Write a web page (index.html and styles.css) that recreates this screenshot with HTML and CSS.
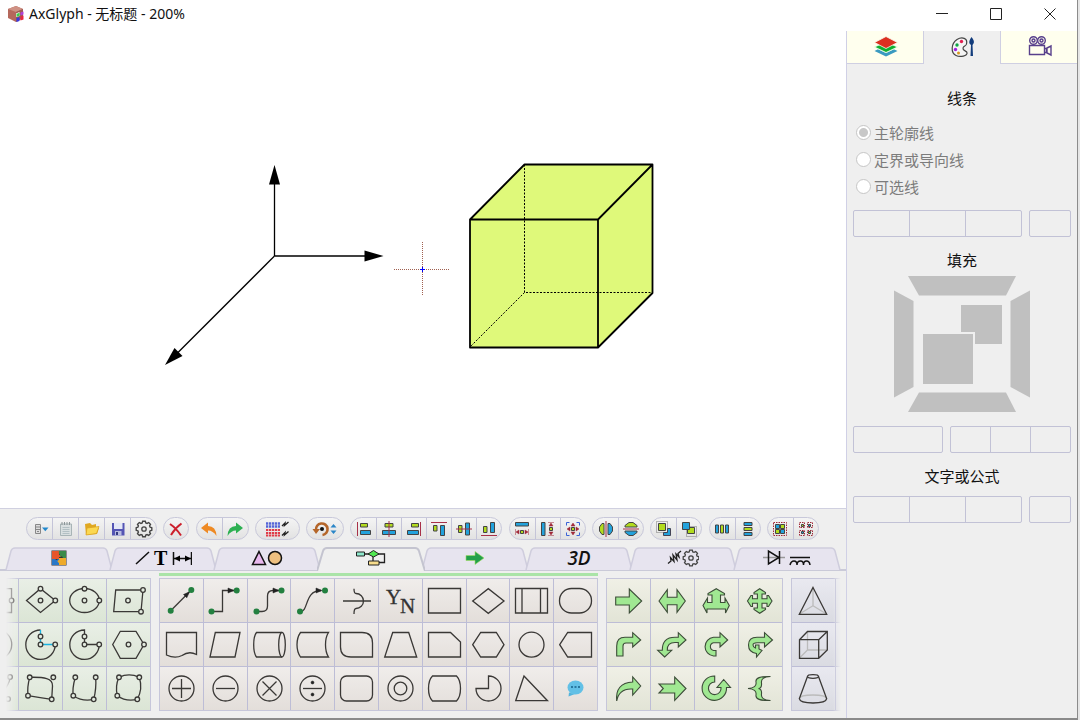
FILE: index.html
```html
<!DOCTYPE html>
<html lang="zh-CN">
<head>
    <meta charset="UTF-8">
    <meta name="viewport" content="width=device-width, initial-scale=1.0">
    <title>AxGlyph - 无标题 - 200%</title>
    <link rel="stylesheet" href="styles.css">
</head>
<body>

<div class="window">
<header class="titlebar">
    <svg class="app-logo" width="18" height="18" viewBox="0 0 18 18">
        <path d="M9 1L16 4V13L9 17L1 13V4Z" fill="#b5685c"/>
        <path d="M9 1L16 4L9 7L1 4Z" fill="#cf9184"/>
        <path d="M9 7L16 4V13L9 17Z" fill="#a05c54"/>
        <path d="M9 8.500l3.500-1.500v4l-3.500 1z" fill="#fff"/>
        <path d="M9.500 9l3-1.200v3l-3 1z" fill="#3ad04a"/>
        <path d="M13.500 7.500l3-1v3l-3 1z" fill="#b040d8"/>
        <path d="M9.500 13l3-1v4l-3 1z" fill="#3a38e0"/>
        <path d="M13.500 11.500l3-1v4l-3 1z" fill="#e82840"/>
    </svg>
    <h1>AxGlyph - 无标题 - 200%</h1>
    <div class="window-buttons">
        <button aria-label="最小化"><svg width="12" height="12" viewBox="0 0 12 12"><path d="M0 5.500H12"/></svg></button>
        <button aria-label="最大化"><svg width="12" height="12" viewBox="0 0 12 12"><path d="M.5 .5H11.500V11.500H.5Z"/></svg></button>
        <button aria-label="关闭"><svg width="12" height="12" viewBox="0 0 12 12"><path d="M.5 .5L11.500 11.500M11.500 .5L.5 11.500"/></svg></button>
    </div>
</header>

<div class="workspace">
<main class="editor">
    <div class="canvas">
        <svg width="100%" height="100%">
            <!-- axes -->
            <g stroke="#000" stroke-width="1.3">
                <path d="M274.500 225V150"/>
                <path d="M274.500 225H366"/>
                <path d="M274.500 225L177 322.500"/>
            </g>
            <path d="M274.500 134L280 153.500H269Z"/>
            <path d="M383.500 225L364.500 230.500V219.500Z"/>
            <path d="M165 334L174.500 317L182.500 325Z"/>
            <!-- cursor -->
            <path d="M394 238.500H449M422.500 211V265" stroke="#a06050" stroke-dasharray="1 1"/>
            <path d="M420 238.500H425M422.500 236V241" stroke="#00f"/>
            <!-- cube -->
            <path d="M470 188.500L524.500 133.500H652.500V262L598 316.500H470Z" fill="#dff97a"/>
            <path d="M524.500 133.500V261.500H652M524.500 261.500L470 316" fill="none" stroke="#000" stroke-dasharray="2 1.500"/>
            <path d="M470 188.500L524.500 133.500H652.500V262L598 316.500H470ZM470 188.500H598V316.500M598 188.500L652.500 133.500" fill="none" stroke="#000" stroke-width="1.800" stroke-linejoin="round"/>
        </svg>
    </div>

    <div class="dock">
        <div class="toolbar">
            <div class="pill">
                <button aria-label="新建"><svg width="18" height="18"><path d="M4.500 4.500h5v9h-5zM4.500 7h5M4.500 9.500h5M6 11.500h2" fill="#ddd" stroke="#888"/><path d="M11 7.500h6.500l-3.200 3.700z" fill="#2288cc"/></svg></button>
                <button aria-label="页面"><svg width="18" height="18"><path d="M3.500 4h11v11.500h-11z" fill="#d9dfe0" stroke="#a8b4b6"/><path d="M5.500 7.500h7M5.500 9.500h7M5.500 11.500h7M5.500 13.500h7" stroke="#b3c0c4"/><path d="M5 2v3M7.500 2v3M10 2v3M12.500 2v3" stroke="#8c9698"/></svg></button>
                <button aria-label="打开"><svg width="18" height="18"><path d="M2 4l5-1 2 2 4-1v3l3 1-2 6-11 1z" fill="#e0a820"/><path d="M4 8l12-1.500-2.500 7-10.500 1.500z" fill="#fbd850" stroke="#d8a020" stroke-width=".7"/></svg></button>
                <button aria-label="保存"><svg width="18" height="18"><path d="M3 3h12.500v12.500H3z" fill="#5455b4"/><path d="M5 3h8.500v6H5z" fill="#e4e8f6"/><path d="M6 11h6.500v4.500H6z" fill="#b8bce0"/><path d="M7 12h2v3H7z" fill="#333a80"/></svg></button>
                <button aria-label="设置"><svg width="18" height="18" fill="none" stroke="#444"><path d="M7.700 2.200h2.600l.5 1.700 1.300.5 1.600-.9 1.800 1.800-.9 1.600.5 1.300 1.700.5v2.600l-1.700.5-.5 1.300.9 1.600-1.800 1.800-1.600-.9-1.300.5-.5 1.700H7.700l-.5-1.700-1.300-.5-1.600.9-1.800-1.800.9-1.600-.5-1.300-1.700-.5V8.700l1.700-.5.5-1.300-.9-1.600 1.800-1.800 1.600.9 1.300-.5z" transform="translate(0 -1)" stroke-width="1.400"/><circle cx="9" cy="9" r="2.200" stroke-width="1.300"/></svg></button>
            </div>
            <div class="pill single">
                <button aria-label="删除"><svg width="18" height="18"><path d="M3 4Q9 8 14 15.500M14.500 3.500Q8 8 4 15" fill="none" stroke="#cc1f2c" stroke-width="2"/></svg></button>
            </div>
            <div class="pill">
                <button aria-label="撤销"><svg width="18" height="18"><path d="M1 8L8 2.500V6Q16 6 16.500 16Q13 10.500 8 10.500V13.500Z" fill="#ee8a24"/></svg></button>
                <button aria-label="重做"><svg width="18" height="18"><path d="M17 8L10 2.500V6Q2 6 1.500 16Q5 10.500 10 10.500V13.500Z" fill="#2db052"/></svg></button>
            </div>
            <div class="pill wide">
                <button aria-label="网格">
                    <svg width="26" height="18" fill="none">
                        <path d="M2 3.500h14M2 6.500h14" stroke="#5566d8" stroke-width="2.300" stroke-dasharray="2.300 .7"/>
                        <path d="M2 10h14M2 13h14M2 15.500h14" stroke="#e03c48" stroke-width="2.200" stroke-dasharray="2.300 .7"/>
                        <path d="M18 6L21 3L20.500 5.500L24.500 2M18 15.500L21 12.500L20.500 15L24.500 11.500" stroke="#222" stroke-width="1.300"/>
                    </svg>
                </button>
            </div>
            <div class="pill mid">
                <button aria-label="旋转">
                    <svg width="26" height="18">
                        <path d="M4 10A5.800 5.800 0 1 1 10.500 15" fill="none" stroke="#b5662a" stroke-width="2.600"/>
                        <path d="M.5 9h7.500l-4 5z" fill="#b5662a"/>
                        <circle cx="10" cy="9" r="2" fill="#111"/>
                        <path d="M18.500 7.500l3-3.500 3 3.500zM18.500 10.500l3 3.500 3-3.500z" fill="#2a86c8"/>
                    </svg>
                </button>
            </div>
            <div class="pill align">
                <button aria-label="左对齐"><svg width="18" height="18"><path class="guide" d="M2.500 2V16"/><path class="lime" d="M5.500 3.500h7v3.500h-7z"/><path class="blue" d="M5.500 10.500h10v4h-10z"/></svg></button>
                <button aria-label="水平居中"><svg width="18" height="18"><path class="lime" d="M5 3.500h8v3.500H5z"/><path class="blue" d="M2.500 10.500h13v4h-13z"/><path class="guide" d="M9 1V17"/></svg></button>
                <button aria-label="右对齐"><svg width="18" height="18"><path class="guide" d="M15.500 2V16"/><path class="lime" d="M6.500 3.500h7v3.500h-7z"/><path class="blue" d="M2.500 10.500h11v4h-11z"/></svg></button>
                <button aria-label="顶端对齐"><svg width="18" height="18"><path class="guide" d="M1 2.500H17"/><path class="lime" d="M3.500 5.500h3.500v5.500h-3.500z"/><path class="blue" d="M10.500 5.500h4v10h-4z"/></svg></button>
                <button aria-label="垂直居中"><svg width="18" height="18"><path class="lime" d="M3.500 5.500h3.500v7h-3.500z"/><path class="blue" d="M10.500 3h4v12h-4z"/><path class="guide" d="M1 9H17"/></svg></button>
                <button aria-label="底端对齐"><svg width="18" height="18"><path class="guide" d="M1 15.500H17"/><path class="lime" d="M3.500 6.500h3.500v6h-3.500z"/><path class="blue" d="M10.500 2.500h4v10h-4z"/></svg></button>
            </div>
            <div class="pill align">
                <button aria-label="等宽"><svg width="18" height="18"><path class="blue" d="M2.500 2.500h13v3.500h-13z"/><path class="lime" d="M7.500 10.500h3v3h-3z"/><path class="arrows" d="M2.500 9v6M15.500 9v6M3 12l3-2v4zM15 12l-3-2v4z"/></svg></button>
                <button aria-label="等高"><svg width="18" height="18"><path class="blue" d="M2.500 2.500h3.500v13h-3.500z"/><path class="lime" d="M10.500 7.500h3v3h-3z"/><path class="arrows" d="M9 2.500h6M9 15.500h6M12 3l-2 3h4zM12 15l-2-3h4z"/></svg></button>
                <button aria-label="等大"><svg width="18" height="18"><path d="M2.500 5.500v-3h3M12.500 2.500h3v3M15.500 12.500v3h-3M5.500 15.500h-3v-3" fill="none" stroke="#3a62d8"/><path class="lime" d="M7.500 7.500h3v3h-3z"/><path class="arrows" d="M3 9l3-2v4zM15 9l-3-2v4zM9 3l-2 3h4zM9 15l-2-3h4z"/></svg></button>
            </div>
            <div class="pill align">
                <button aria-label="水平翻转"><svg width="18" height="18"><path class="lime" d="M7 3.500v11H5L2.500 11V7L5 3.500z"/><path class="blue" d="M11 3.500v11h2l2.500-3.500V7L13 3.500z"/><path class="guide" d="M9 1V17"/></svg></button>
                <button aria-label="垂直翻转"><svg width="18" height="18"><path class="lime" d="M3 7h12V5.500L11 2.500H7L3 5.500z"/><path class="blue" d="M3 11h12v1.500l-4 3H7l-4-3z"/><path class="guide" d="M1 9H17"/></svg></button>
            </div>
            <div class="pill align">
                <button aria-label="置于顶层"><svg width="18" height="18"><path d="M1.500 1.500h11v11h-11z" fill="none" stroke="#777" stroke-dasharray="1 1"/><path d="M12.500 8.500h3v7h-7v-3h4z" fill="#22a2dc" stroke="#445"/><path class="lime" d="M3.500 3.500h7v7h-7z"/></svg></button>
                <button aria-label="置于底层"><svg width="18" height="18"><path d="M6.500 6.500h10v10h-10z" fill="none" stroke="#777" stroke-dasharray="1 1"/><path class="lime" d="M7.500 7.500h7v6h-7z"/><path class="blue" d="M2.500 2.500h7v7h-7z"/></svg></button>
            </div>
            <div class="pill align">
                <button aria-label="横向分布"><svg width="18" height="18"><path class="blue" d="M2.500 5h3v8h-3zM12.500 5h3v8h-3z"/><path class="lime" d="M7.500 5h3v8h-3z"/></svg></button>
                <button aria-label="纵向分布"><svg width="18" height="18"><path class="blue" d="M5 2.500h8v3H5zM5 12.500h8v3H5z"/><path class="lime" d="M5 7.500h8v3H5z"/></svg></button>
            </div>
            <div class="pill align">
                <button aria-label="组合"><svg width="18" height="18"><path d="M2.500 2.500h13v13h-13z" fill="none" stroke="#a02838" stroke-dasharray="1.500 1"/><path class="lime" d="M9.500 4.500h4v4h-4zM4.500 9.500h4v4h-4z"/><path class="blue" d="M4.500 4.500h4v4h-4zM9.500 9.500h4v4h-4z"/></svg></button>
                <button aria-label="取消组合"><svg width="18" height="18"><path d="M2.500 2.500h5v5h-5zM10.500 2.500h5v5h-5zM2.500 10.500h5v5h-5zM10.500 10.500h5v5h-5z" fill="none" stroke="#a02838" stroke-dasharray="1.500 1"/><path class="lime" d="M4.500 4.500h2v2h-2zM11.500 11.500h2v2h-2z"/><path class="blue" d="M11.500 4.500h2v2h-2zM4.500 11.500h2v2h-2z"/></svg></button>
            </div>
        </div>

        <nav class="tabs">
            <button aria-label="图库"><svg width="16" height="16"><path d="M.5 .5h15v15H.5z" fill="#333"/><path d="M1 1h7v4q3 0 2 2H8v2H5q-2 2-2 0H1z" fill="#e8552a"/><path d="M8 1h7v7h-3q-1-3-3-1V5q-2-2-1-4z" fill="#3a8a48"/><path d="M1 9h3q1 2 3 0h1v6H1z" fill="#2a78c8"/><path d="M8 8h7v7H8v-2q-3-2 0-3z" fill="#eeaa2a"/></svg></button>
            <button aria-label="线条与文字"><svg width="58" height="22"><path d="M2 17L15 5M39.500 5v13M57.500 5v13M40 11.500h17" fill="none" stroke="#111" stroke-width="1.500"/><path d="M40 11.500l6-3v6zM57 11.500l-6-3v6z"/><text class="serif-icon" x="20" y="18">T</text></svg></button>
            <button aria-label="基本图形"><svg width="32" height="16"><path d="M8 1.500L14.500 14.500H1.500Z" fill="#e8b8ee" stroke="#111" stroke-width="1.500"/><circle cx="24" cy="8" r="6.500" fill="#eec080" stroke="#111" stroke-width="1.500"/></svg></button>
            <button class="active" aria-label="流程图"><svg width="32" height="18" stroke="#222"><path d="M9 5h8M18 7v5M23 5h6.500v8.500h-6" fill="none" stroke-width="1.300"/><path d="M1.500 3h8v4h-8z" fill="#8ee8cc"/><path d="M18.500 1.500L24 5l-5.500 3L13 5z" fill="#50e850"/><path d="M13.500 12h10.500v4H13.500z" fill="#f6dc8c"/></svg></button>
            <button aria-label="箭头"><svg width="20" height="16"><path d="M1 5.500h9V1.500L19 8l-9 6.500v-4H1z" fill="#23a04a" stroke="#9fdc60" stroke-width=".6"/></svg></button>
            <button class="tab-3d">3D</button>
            <button aria-label="机械"><svg width="32" height="18" fill="none" stroke="#222"><path d="M1 14.500L4 12L3.500 8.500L7 12.500L6 6L10 11L9 5L12 8L11 4.500L14 2" stroke-width="1.300"/><g stroke="#444" transform="translate(15 0)"><path d="M7.700 1.200h2.600l.5 1.700 1.300.5 1.600-.9 1.800 1.800-.9 1.600.5 1.300 1.700.5v2.600l-1.700.5-.5 1.300.9 1.600-1.800 1.800-1.600-.9-1.300.5-.5 1.700H7.700l-.5-1.700-1.300-.5-1.600.9-1.800-1.800.9-1.600-.5-1.300-1.700-.5V7.700l1.700-.5.5-1.300-.9-1.600 1.800-1.800 1.600.9 1.300-.5z" stroke-width="1.300"/><circle cx="9" cy="9" r="2.200" stroke-width="1.300"/></g></svg></button>
            <button aria-label="电路"><svg width="50" height="18" fill="none" stroke="#111" stroke-width="1.500"><path d="M1 8.500h22" stroke="#999"/><path d="M6.500 2v13L17 8.500zM17.500 2v13"/><path d="M28 8.500h20M28 16q1-4 4-4 3 0 3 4 0-4 3.500-4 3 0 3 4 0-4 3-4 3 0 3.500 4"/></svg></button>
        </nav>

        <div class="palette">
            <div class="group nodes">
                <button class="cut-left" aria-label="矩形"><svg viewBox="0 0 43 43"><path d="M8 9.700H36.500V33.500H8"/><circle cx="36.500" cy="21.500" r="2.300"/></svg></button>
                <button aria-label="菱形节点"><svg viewBox="0 0 43 43"><path d="M7.500 21.500L21.500 9.700L36.300 21.500L21.500 33.500Z"/><circle cx="21.500" cy="9.700" r="2.300"/><circle cx="36.300" cy="21.500" r="2.300"/><circle cx="21.500" cy="21.500" r="2.300"/></svg></button>
                <button aria-label="椭圆节点"><svg viewBox="0 0 43 43"><ellipse cx="21.500" cy="21.500" rx="14.800" ry="12"/><circle cx="21.500" cy="9.700" r="2.300"/><circle cx="36.300" cy="21.500" r="2.300"/><circle cx="21.500" cy="21.500" r="2.300"/></svg></button>
                <button aria-label="四边形节点"><svg viewBox="0 0 43 43"><path d="M8.700 11H36L34 32.700H6.700Z"/><circle cx="36" cy="11" r="2.300"/><circle cx="34" cy="32.700" r="2.300"/><circle cx="21" cy="21.500" r="2.300"/></svg></button>

                <button class="cut-left" aria-label="圆"><svg viewBox="0 0 43 43"><circle class="outline" cx="22" cy="21.500" r="14.700"/></svg></button>
                <button aria-label="圆弧"><svg viewBox="0 0 43 43"><path d="M21.500 7A14.700 14.700 0 1 0 36.200 21.500"/><path d="M21.500 7V21.500H36" stroke="#1bb2e0"/><circle cx="21.500" cy="13.500" r="2.300"/><circle cx="21.500" cy="21.500" r="2.300"/><circle cx="36.200" cy="21.500" r="2.300"/></svg></button>
                <button aria-label="扇形"><svg viewBox="0 0 43 43"><path d="M21.500 7A14.700 14.700 0 1 0 36.200 21.500H21.500Z"/><circle cx="21.500" cy="13.500" r="2.300"/><circle cx="21.500" cy="21.500" r="2.300"/><circle cx="36.200" cy="21.500" r="2.300"/></svg></button>
                <button aria-label="正多边形"><svg viewBox="0 0 43 43"><path d="M5.700 21.500L13.300 8.300H29L37 21.500L29 35.300H13.300Z"/><circle cx="37" cy="21.500" r="2.300"/><circle cx="21.500" cy="21.500" r="2.300"/></svg></button>

                <button class="cut-left" aria-label="曲线"><svg viewBox="0 0 43 43"><path d="M35 10Q35 15 30 22"/><circle cx="35" cy="10" r="2.300"/><circle cx="33" cy="32" r="2.300"/></svg></button>
                <button aria-label="闭合曲线"><svg viewBox="0 0 43 43"><path d="M10.700 10.300C25 10 34 11 33.500 19L32.700 32.300Q22 31 9 28.700Q8 20 10.700 10.300"/><circle cx="10.700" cy="10.300" r="2.300"/><circle cx="34.300" cy="10.300" r="2.300"/><circle cx="9" cy="28.700" r="2.300"/><circle cx="32.700" cy="32.300" r="2.300"/></svg></button>
                <button aria-label="开放曲线"><svg viewBox="0 0 43 43"><path d="M12.300 10.300Q9 22 10.300 28.700Q20 35 30.700 32.300Q33.500 22 32.700 10.300"/><circle cx="12.300" cy="10.300" r="2.300"/><circle cx="32.700" cy="10.300" r="2.300"/><circle cx="10.300" cy="28.700" r="2.300"/><circle cx="30.700" cy="32.300" r="2.300"/></svg></button>
                <button aria-label="平滑曲线"><svg viewBox="0 0 43 43"><path d="M12 10.300Q8 19 10.300 28.700Q19 35 30.300 32.300Q36 22 32.300 10.300Q22 5.500 12 10.300"/><circle cx="12" cy="10.300" r="2.300"/><circle cx="32.300" cy="10.300" r="2.300"/><circle cx="10.300" cy="28.700" r="2.300"/><circle cx="30.300" cy="32.300" r="2.300"/></svg></button>
            </div>

            <div class="group flow">
                <button aria-label="直线连接"><svg viewBox="0 0 43 43"><path d="M10.700 31.700L31.300 11"/><path class="tip" d="M29.500 12.800L23.500 15.500L26.800 18.800Z"/><circle class="dot" cx="10.700" cy="31.700" r="3"/><circle class="dot" cx="31.300" cy="11" r="3"/></svg></button>
                <button aria-label="折线连接"><svg viewBox="0 0 43 43"><path d="M7.500 32.500H18.500V11.500H32"/><path class="tip" d="M30 11.500L24 9V14Z"/><circle class="dot" cx="7.500" cy="32.500" r="3"/><circle class="dot" cx="32.700" cy="11.500" r="3"/></svg></button>
                <button aria-label="圆角连接"><svg viewBox="0 0 43 43"><path d="M8.500 32.500H14Q19.500 32.500 19.500 27V17Q19.500 11.500 25 11.500H33"/><path class="tip" d="M31 11.500L25 9V14Z"/><circle class="dot" cx="8.500" cy="32.500" r="3"/><circle class="dot" cx="33.500" cy="11.500" r="3"/></svg></button>
                <button aria-label="曲线连接"><svg viewBox="0 0 43 43"><path d="M9 32.500C18 33 13 11.500 30 11.500"/><path class="tip" d="M31 11.500L25 9V14Z"/><circle class="dot" cx="9" cy="32.500" r="3"/><circle class="dot" cx="34" cy="11.500" r="3"/></svg></button>
                <button aria-label="跨线"><svg viewBox="0 0 43 43"><path d="M8 22H36M19 9.700Q19 14.500 21 14.500A7.500 7.500 0 0 1 21 29.500Q19 29.500 19 35"/></svg></button>
                <button aria-label="是否"><svg viewBox="0 0 43 43"><text class="yn" x="7" y="25">Y</text><text class="yn" x="21" y="34">N</text></svg></button>
                <button aria-label="过程"><svg viewBox="0 0 43 43"><path d="M5.500 9.500H37.500V34H5.500Z"/></svg></button>
                <button aria-label="判定"><svg viewBox="0 0 43 43"><path d="M5.700 22L21.300 9.700L37 22L21.300 34.300Z"/></svg></button>
                <button aria-label="子过程"><svg viewBox="0 0 43 43"><path d="M5.500 9.500H37.500V34H5.500ZM12 9.500V34M30.500 9.500V34"/></svg></button>
                <button aria-label="终止"><svg viewBox="0 0 43 43"><rect x="5.500" y="9.500" width="32" height="24.500" rx="12"/></svg></button>

                <button aria-label="文档"><svg viewBox="0 0 43 43"><path d="M6.500 9.500H36.500V31.500Q29 27.500 22 32.500Q15 36 6.500 32Z"/></svg></button>
                <button aria-label="数据"><svg viewBox="0 0 43 43"><path d="M11.300 9.500H36L31 34H6Z"/></svg></button>
                <button aria-label="直接存储"><svg viewBox="0 0 43 43"><path d="M34 9.500H8.500Q5.700 13 5.700 21.700T8.500 34H34"/><ellipse cx="34" cy="21.700" rx="3.300" ry="12.300"/></svg></button>
                <button aria-label="存储数据"><svg viewBox="0 0 43 43"><path d="M9.500 9.500H37.500Q34.500 14 34.500 21.700T37.500 34H9.500Q6 29 6 21.700T9.500 9.500Z"/></svg></button>
                <button aria-label="对角圆角"><svg viewBox="0 0 43 43"><path d="M5.500 9.500H27Q37.500 9.500 37.500 20V34H16Q5.500 34 5.500 24Z"/></svg></button>
                <button aria-label="手动操作"><svg viewBox="0 0 43 43"><path d="M13.700 9.500H29.700L37.700 34H5.700Z"/></svg></button>
                <button aria-label="卡片"><svg viewBox="0 0 43 43"><path d="M5.500 9.500H27.500L37.500 19V34H5.500Z"/></svg></button>
                <button aria-label="准备"><svg viewBox="0 0 43 43"><path d="M5.700 21.700L13.700 9.500H29.300L37 21.700L29.300 34H13.700Z"/></svg></button>
                <button aria-label="联系"><svg viewBox="0 0 43 43"><circle cx="21.500" cy="21.700" r="12.500"/></svg></button>
                <button aria-label="显示"><svg viewBox="0 0 43 43"><path d="M5.700 21.700L13.700 9.500H37.500V34H13.700Z"/></svg></button>

                <button aria-label="加"><svg viewBox="0 0 43 43"><circle cx="21.500" cy="21.500" r="12.500"/><path d="M12 21.500H31M21.500 12V31"/></svg></button>
                <button aria-label="减"><svg viewBox="0 0 43 43"><circle cx="21.500" cy="21.500" r="12.500"/><path d="M12 21.500H31"/></svg></button>
                <button aria-label="乘"><svg viewBox="0 0 43 43"><circle cx="21.500" cy="21.500" r="12.500"/><path d="M14.500 14.500L28.500 28.500M28.500 14.500L14.500 28.500"/></svg></button>
                <button aria-label="除"><svg viewBox="0 0 43 43"><circle cx="21.500" cy="21.500" r="12.500"/><path d="M12 21.500H31"/><circle class="tip" cx="21.500" cy="15.500" r="1.500"/><circle class="tip" cx="21.500" cy="27.500" r="1.500"/></svg></button>
                <button aria-label="圆角矩形"><svg viewBox="0 0 43 43"><rect x="5.500" y="9" width="32" height="25" rx="6"/></svg></button>
                <button aria-label="同心圆"><svg viewBox="0 0 43 43"><circle cx="21.500" cy="21.500" r="12.500"/><circle cx="21.500" cy="21.500" r="6.300"/></svg></button>
                <button aria-label="鼓形"><svg viewBox="0 0 43 43"><path d="M9.500 9H33.500Q37.500 13 37.500 21.500T33.500 34H9.500Q5.500 30 5.500 21.500T9.500 9Z"/></svg></button>
                <button aria-label="缺角圆"><svg viewBox="0 0 43 43"><path d="M21.500 9A12.500 12.500 0 1 1 9 21.500H21.500Z"/></svg></button>
                <button aria-label="三角形"><svg viewBox="0 0 43 43"><path d="M14 9L37.500 33.700H5.700Z"/></svg></button>
                <button aria-label="批注"><svg viewBox="0 0 43 43"><path d="M15 25.500L14.500 29.500L21 27Z" fill="#55b4dc" stroke="none"/><ellipse cx="21.500" cy="20.500" rx="8" ry="7" fill="#62c0e6" stroke="none"/><path d="M17 20h2M20.500 20h2M24 20h2" stroke="#2878a0" stroke-width="2"/></svg></button>
            </div>

            <div class="group arrows-group">
                <button aria-label="右箭头"><svg viewBox="0 0 43 43"><path d="M8.700 18H22.300V10L34.700 22L22.300 34V26H8.700Z"/></svg></button>
                <button aria-label="左右箭头"><svg viewBox="0 0 43 43"><path d="M8 22L16.300 10.700V18.300H26V10.700L34.300 22L26 33.300V25.700H16.300V33.300Z"/></svg></button>
                <button aria-label="三向箭头"><svg viewBox="0 0 43 43"><path d="M21.300 9.700L29.500 14.500V16H25.500V23.500H30V19L34.300 26.500L30.500 34V30H12V34L8 26.500L12.500 19V23.500H17V16H13V14.500Z"/></svg></button>
                <button aria-label="四向箭头"><svg viewBox="0 0 43 43"><path d="M20.700 9.700L26.500 13.500V15H23V19.700H28V16.500H29.500L33 22L29.500 27.500H28V24.300H23V29H26.500V30.500L20.700 34.300L15 30.500V29H18.400V24.300H13.500V27.500H12L8.500 22L12 16.500H13.500V19.700H18.400V15H15V13.500Z"/></svg></button>

                <button aria-label="右转箭头"><svg viewBox="0 0 43 43"><path d="M9.700 33V23Q9.700 14.300 18 14.300H25.700V9.700L33.700 17L25.700 24V20H19Q16 20 16 23V33Z"/></svg></button>
                <button aria-label="双向弯箭头"><svg viewBox="0 0 43 43"><path d="M13.700 34L6.700 27.300H11.300Q11 14.300 24 14.300H27.300V9.700L35 17L27.300 24V19.500H24Q16 19.500 16.300 27.300H20.700Z"/></svg></button>
                <button aria-label="回转箭头"><svg viewBox="0 0 43 43"><path d="M25 14.300H18.500A9.400 9.400 0 0 0 18.500 33H21V27.500H18.500A4 4 0 0 1 18.500 19.700H25V24L32.700 17L25 9.700Z"/></svg></button>
                <button aria-label="双回转箭头"><svg viewBox="0 0 43 43"><path d="M25.500 14.300H18Q9.500 14.300 9.500 22Q9.500 29.500 17.500 30.500V34L23 27.500L20 26V22H16.500V25Q14 24 14 22Q14 19.700 18 19.700H25.500V24L33.500 17L25.500 9.700Z"/></svg></button>

                <button aria-label="弧形箭头"><svg viewBox="0 0 43 43"><path d="M9.700 34Q8 16 25.700 15V10L33.700 19L25.700 28V22Q12 21 9.700 34Z"/></svg></button>
                <button aria-label="燕尾箭头"><svg viewBox="0 0 43 43"><path d="M8 17H23.700V10L35 21.500L23.700 33.300V26H8L12.300 21.500Z"/></svg></button>
                <button aria-label="环形箭头"><svg viewBox="0 0 43 43"><path d="M19.700 9A12.200 12.200 0 1 0 31.500 20.500H35.500L28.700 12.500L22 20.500H26A6.300 6.300 0 1 1 19.700 15Z"/></svg></button>
                <button aria-label="花括号"><svg viewBox="0 0 43 43"><path d="M31.500 9.500Q16 9 17 15Q18 21 9 21.500Q18 22 17 28Q16 34 31.500 33.500Q21.500 33 22.500 27Q23 22 19.500 21.500Q23 21 22.500 16Q21.500 10 31.500 9.500Z"/></svg></button>
            </div>

            <div class="group solids">
                <button aria-label="四面体"><svg viewBox="0 0 43 43"><path class="hidden-edge" d="M21 8.500V26.700L7.500 35M21 26.700L34.500 35"/><path d="M21 8.500L34.700 35.300H7.300Z"/></svg></button>
                <button aria-label="更多"></button>
                <button aria-label="立方体"><svg viewBox="0 0 43 43"><path class="hidden-edge" d="M15.500 8.500V27H35M15.500 27L7.500 35"/><path d="M7.500 16.700L15.500 8.500H35.300V27L26.700 35.300H7.500ZM7.500 16.700H26.700V35.300M26.700 16.700L35.300 8.500"/></svg></button>
                <button aria-label="更多"></button>
                <button aria-label="圆台"><svg viewBox="0 0 43 43"><path class="hidden-edge" d="M7.300 31.700Q8 28 21 28T34.700 31.700"/><ellipse cx="21" cy="9.500" rx="5.500" ry="1.800"/><path d="M15.500 9.500L7.300 31.700Q8 36 21 36T34.700 31.700L26.500 9.500"/></svg></button>
                <button aria-label="更多"></button>
            </div>
        </div>
    </div>
</main>

<aside class="side">
    <nav class="side-tabs">
        <button aria-label="图层"><svg width="26" height="22"><path d="M13 10.500L24.500 16 13 21.500 1.500 16 5 14.300 13 18 21 14.300" fill="#3a9ac0"/><path d="M13 7L24.500 12 13 17.500 1.500 12z" fill="#10b030" stroke="#f8fff0" stroke-width=".8"/><path d="M13 1.500L24.500 7.500 13 13.500 1.500 7.500z" fill="#dc3020" stroke="#f8fff0" stroke-width=".8"/></svg></button>
        <button class="active" aria-label="样式"><svg width="26" height="22"><path d="M16.500 8C18 2 12 .5 7 3.500C1 7.500 .5 17 6 19.500C10 21.500 18 20 17 16.500C16.500 14.500 12.500 15 13 12C13.500 9.500 16 10.500 16.500 8Z" fill="#f4f4f4" stroke="#444" stroke-width="1.200"/><circle cx="11.500" cy="5.500" r="1.700" fill="#e02050"/><circle cx="7" cy="9" r="1.700" fill="#10a848"/><circle cx="5.500" cy="13.500" r="1.700" fill="#a020e0"/><circle cx="8.500" cy="17" r="1.500" fill="#d89820"/><path d="M21.500 1Q25 5 23.500 7.500L22.500 9L23 20H20.500L21 9L19.500 7.500Q18.500 5 21.500 1Z" fill="#123c7c"/></svg></button>
        <button aria-label="动画"><svg width="26" height="22" fill="none" stroke="#58408c" stroke-width="1.400"><circle cx="6.500" cy="5.500" r="3.800"/><circle cx="6.500" cy="5.500" r="1.500"/><circle cx="14.500" cy="5.500" r="3.800"/><circle cx="14.500" cy="5.500" r="1.500"/><path d="M2.500 10.500h15v9h-15zM17.500 13.500h2v4h-2M20 13l4-2v9l-4-2z"/></svg></button>
    </nav>

    <section>
        <h2>线条</h2>
        <form class="line-kind">
            <label><input type="radio" name="line" checked disabled>主轮廓线</label>
            <label><input type="radio" name="line" disabled>定界或导向线</label>
            <label><input type="radio" name="line" disabled>可选线</label>
        </form>
        <div class="slots">
            <div class="slot-group"><button aria-label="线型" disabled></button><button aria-label="起点" disabled></button><button aria-label="终点" disabled></button></div>
            <div class="slot-group"><button aria-label="线条颜色" disabled></button></div>
        </div>
    </section>

    <section class="fill-section">
        <h2>填充</h2>
        <svg class="fill-preview" width="136" height="136" fill="#c0c0c0">
            <path d="M14 0H122L112 19.500H25Z"/>
            <path d="M14 136H122L112 116.500H25Z"/>
            <path d="M0 14.500L19.500 25V111L0 121.500Z"/>
            <path d="M136 14.500L116.500 25V111L136 121.500Z"/>
            <path d="M67 29H108V68H67Z"/>
            <path d="M28 57H80V109H28Z" stroke="#efefef" stroke-width="2"/>
        </svg>
        <div class="slots fill-slots">
            <div class="slot-group"><button aria-label="填充类型" disabled></button></div>
            <div class="slot-group"><button aria-label="前景" disabled></button><button aria-label="背景" disabled></button><button aria-label="透明" disabled></button></div>
        </div>
    </section>

    <section class="text-section">
        <h2>文字或公式</h2>
        <div class="slots">
            <div class="slot-group"><button aria-label="字体" disabled></button><button aria-label="字号" disabled></button><button aria-label="样式" disabled></button></div>
            <div class="slot-group"><button aria-label="文字颜色" disabled></button></div>
        </div>
    </section>
</aside>
</div>
</div>

</body>
</html>
```

FILE: styles.css
```css
* {
    box-sizing: border-box;
}
body {
    margin: 0;
    font-family: "Noto Sans", "Noto Sans CJK SC", sans-serif;
    font-size: 14px;
    color: #111;
    background: #e6e6e6;
}
button {
    display: flex;
    align-items: center;
    justify-content: center;
    margin: 0;
    padding: 0;
    border: none;
    background: none;
    color: inherit;
}
svg {
    flex: none;
    display: block;
}
.window {
    display: flex;
    flex-direction: column;
    height: 100vh;
    margin-right: 2px;
    border-right: 1px solid #8c8c8c;
    border-bottom: 2px solid #8a8a8a;
}

/* title bar */
.titlebar {
    display: flex;
    align-items: center;
    height: 31px;
    padding-left: 7px;
    padding-bottom: 3px;
    background: #fff;
}
.titlebar h1 {
    flex: 1;
    margin: 0 0 0 4px;
    font-size: 14px;
    font-weight: normal;
    line-height: 20px;
}
.window-buttons {
    display: flex;
}
.window-buttons button {
    width: 54px;
    height: 28px;
}
.window-buttons path {
    fill: none;
    stroke: #222;
}

.workspace {
    display: flex;
    flex: 1;
    min-height: 0;
}
.editor {
    display: flex;
    flex-direction: column;
    flex: 1;
    min-width: 0;
}
.canvas {
    flex: 1;
    min-height: 0;
    background: #fff;
    overflow: hidden;
}

/* bottom dock */
.dock {
    background: #efefef;
    border-top: 1px solid #d0d0e0;
}
.toolbar {
    display: flex;
    justify-content: space-between;
    padding: 8px 27px 7px 26px;
}
.pill {
    display: flex;
    height: 23px;
    border: 1px solid #c8c8da;
    border-radius: 12px;
    background: linear-gradient(#f4f4f4, #e2e2e2);
}
.pill button {
    width: 25px;
}
.pill button + button {
    width: 26px;
    border-left: 1px solid #c4c4d8;
}
.pill.align button + button {
    width: 25px;
}
.pill.single button {
    width: 24px;
}
.pill.wide button {
    width: 43px;
}
.pill.mid button {
    width: 36px;
}
.lime, .blue {
    stroke: #444;
}
.lime {
    fill: #b2dc1e;
}
.blue {
    fill: #22a2dc;
}
.guide {
    stroke: #a83048;
}
.arrows {
    fill: #a02838;
    stroke: #a02838;
    stroke-width: 0.5;
}

.tabs {
    display: flex;
    height: 24px;
    padding: 0 5px;
    border-bottom: 2px solid #cacad8;
}
.tabs button {
    flex: 1;
    height: 24px;
    margin-right: -4px;
    padding-bottom: 2px;
    background: url("data:image/svg+xml,%3Csvg xmlns='http://www.w3.org/2000/svg' viewBox='0 0 108 24' preserveAspectRatio='none'%3E%3Cpath d='M1 23L6 4Q7 1 10 1H98Q101 1 102 4L107 23' fill='%23e7e4ef' stroke='%23cfcddd' stroke-width='1.500'/%3E%3C/svg%3E") 0 0 / 100% 100% no-repeat;
}
.tabs button:last-child {
    margin-right: 0;
}
.tabs .active {
    z-index: 1;
    background-image: url("data:image/svg+xml,%3Csvg xmlns='http://www.w3.org/2000/svg' viewBox='0 0 108 24' preserveAspectRatio='none'%3E%3Cpath d='M0 24L6 4Q7 1 10 1H98Q101 1 102 4L108 24' fill='%23efefef' stroke='%23c4c4d0' stroke-width='2'/%3E%3C/svg%3E");
}
.tabs .tab-3d {
    font-family: "Open Sans", sans-serif;
    font-size: 19px;
    font-style: italic;
    font-weight: 600;
    line-height: 20px;
}
.serif-icon {
    font-family: "Liberation Serif", serif;
    font-size: 20px;
    font-weight: bold;
}

.palette {
    display: flex;
    gap: 8px;
    padding: 7px 5px 7px 6px;
}
.group {
    position: relative;
    display: grid;
    gap: 1px;
    border: 1px solid #c6c6da;
    background: #bdbdd6;
}
.group button {
    height: 43px;
    overflow: hidden;
}
.group svg {
    width: 43px;
    height: 43px;
    fill: none;
    stroke: #3a3836;
    stroke-width: 1.3;
}
.nodes {
    grid-template-columns: 12px repeat(3, 43px);
    border-left: none;
    -webkit-mask-image: linear-gradient(to right, transparent, #000 13px);
    mask-image: linear-gradient(to right, transparent, #000 13px);
}
.nodes button {
    background: linear-gradient(#e9efe6, #dbe5d5);
}
.nodes circle {
    fill: #e2eade;
}
.nodes .outline {
    fill: none;
}
.nodes .cut-left {
    justify-content: flex-end;
}
.flow {
    flex: 1;
    grid-template-columns: repeat(10, minmax(0, 1fr));
}
.flow::before {
    content: "";
    position: absolute;
    top: -6px;
    left: -1px;
    right: -1px;
    height: 3px;
    background: #aae4a8;
}
.flow button {
    background: linear-gradient(#f0edeb, #e3deda);
}
.group .dot {
    fill: #238040;
    stroke: none;
}
.group .tip {
    fill: #222;
    stroke: #222;
    stroke-width: 0.5;
}
.yn {
    fill: #333;
    stroke: #333;
    stroke-width: 0.3;
    font-family: "Liberation Serif", serif;
    font-size: 21px;
}
.arrows-group {
    grid-template-columns: repeat(4, 43px);
}
.arrows-group button {
    background: linear-gradient(#f0f0e6, #e2e4d6);
}
.arrows-group path {
    fill: #a0e892;
    stroke: #3c4c38;
    stroke-width: 1.1;
}
.solids {
    grid-template-columns: 43px 5px;
    border-right: none;
    -webkit-mask-image: linear-gradient(to left, transparent, #000 8px);
    mask-image: linear-gradient(to left, transparent, #000 8px);
}
.solids button {
    background: linear-gradient(#e9e9f0, #dadbe2);
}
.group .hidden-edge {
    stroke: #bbb;
}

/* right side panel */
.side {
    width: 231px;
    border-left: 1px solid #d0d0e6;
    background: #efefef;
}
.side-tabs {
    display: flex;
    height: 33px;
    margin-bottom: 24px;
}
.side-tabs button {
    flex: 1;
    padding: 0 0 2px 2px;
    border-bottom: 1px solid #cfcfe2;
    background: #ffffee;
}
.side-tabs .active {
    border: 1px solid #cfcfe2;
    border-width: 0 1px;
    background: #efefef;
}
.side section {
    padding: 0 6px;
    margin-bottom: 13px;
}
.side h2 {
    margin: 0;
    font-size: 15px;
    font-weight: normal;
    line-height: 20px;
    text-align: center;
}
.side .text-section h2 {
    margin-bottom: 10px;
}
.line-kind {
    margin: 11px 0 10px;
}
.line-kind label {
    display: flex;
    align-items: center;
    gap: 3px;
    height: 27px;
    padding-left: 3px;
    font-size: 15px;
    line-height: 20px;
    color: #7c7c7c;
}
.line-kind input {
    appearance: none;
    width: 15px;
    height: 15px;
    margin: 0;
    border: 1px solid #c6c6c6;
    border-radius: 50%;
    background: #fff;
}
.line-kind input:checked {
    background: radial-gradient(circle, #c8c8c8 4px, #fff 5px);
}
.slots {
    display: grid;
    grid-template-columns: 4fr 1fr;
    gap: 7px;
}
.fill-slots {
    grid-template-columns: 3fr 4fr;
}
.slot-group {
    display: flex;
    height: 27px;
    border: 1px solid #c2c2d6;
    border-radius: 2px;
}
.slot-group button {
    flex: 1;
}
.slot-group button + button {
    border-left: 1px solid #c2c2d6;
}
.fill-preview {
    margin: 6px auto 14px;
}
```
